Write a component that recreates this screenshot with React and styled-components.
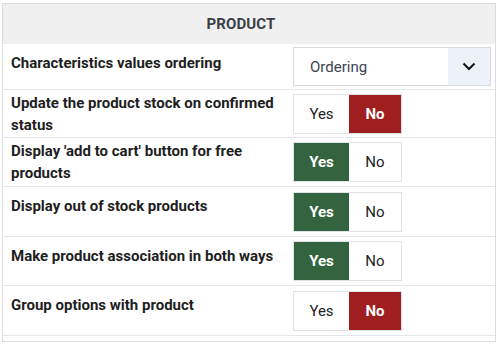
import React from 'react';
import styled, { createGlobalStyle } from 'styled-components';

const GlobalStyle = createGlobalStyle`
  body {
    margin: 0;
    background: #fff;
    font-family: Roboto, "Liberation Sans", Arial, sans-serif;
  }
`;

const Panel = styled.div`
  margin: 3px 0 0 2px;
  width: 494px;
  box-sizing: border-box;
  border: 1px solid #dcdcdc;
  padding-bottom: 5px;
`;

const Header = styled.div`
  height: 40px;
  background: #f0f0f0;
  display: flex;
  align-items: center;
  justify-content: center;
  padding-right: 16px;
  font-size: 15px;
  font-weight: 700;
  color: #3a3f47;
  letter-spacing: 0.1px;
`;

const Row = styled.div`
  display: grid;
  grid-template-columns: 290px 1fr;
  height: ${(p) => p.$height}px;
  border-bottom: 1px solid #e4e6e9;
`;

const Label = styled.div`
  padding: ${(p) => (p.$wrap ? 2 : 8)}px 2px 0 8px;
  font-size: 15px;
  line-height: 22px;
  font-weight: 700;
  color: #1e1e1e;
`;

const Control = styled.div`
  display: flex;
  align-items: center;
`;

const Select = styled.div`
  display: flex;
  width: 198px;
  height: 39px;
  box-sizing: border-box;
  border: 1px solid #d6dbe2;
  background: #fff;
`;

const SelectValue = styled.div`
  flex: 1;
  display: flex;
  align-items: center;
  padding-left: 16px;
  font-size: 15px;
  color: #3d4450;
`;

const SelectArrow = styled.div`
  width: 42px;
  display: flex;
  align-items: center;
  justify-content: center;
  background: #edf2f9;
`;

const Toggle = styled.div`
  display: flex;
  height: 40px;
  box-sizing: border-box;
  border: 1px solid #dfe3e8;
`;

const Option = styled.div`
  width: ${(p) => p.$width}px;
  display: flex;
  align-items: center;
  justify-content: center;
  font-size: 15px;
  font-weight: ${(p) => (p.$active ? 700 : 400)};
  color: ${(p) => (p.$active ? '#fff' : '#222')};
  background: ${(p) => (p.$active ? (p.$tone === 'yes' ? '#346340' : '#9f1e20') : '#fff')};
`;

const settings = [
  { label: 'Update the product stock on confirmed status', value: false, wrap: true, height: 47 },
  { label: "Display 'add to cart' button for free products", value: true, wrap: true, height: 48 },
  { label: 'Display out of stock products', value: true, height: 49 },
  { label: 'Make product association in both ways', value: true, height: 48 },
  { label: 'Group options with product', value: false, height: 49 },
];

const YesNo = ({ value }) => (
  <Toggle>
    <Option $width={55} $active={value} $tone="yes">Yes</Option>
    <Option $width={52} $active={!value} $tone="no">No</Option>
  </Toggle>
);

const App = () => (
  <>
    <GlobalStyle />
    <Panel>
      <Header>PRODUCT</Header>
      <Row $height={45}>
        <Label>Characteristics values ordering</Label>
        <Control>
          <Select>
            <SelectValue>Ordering</SelectValue>
            <SelectArrow>
              <svg width="14" height="9" viewBox="0 0 14 9">
                <path d="M1.5 1.5 L7 7 L12.5 1.5" fill="none" stroke="#111" strokeWidth="2" />
              </svg>
            </SelectArrow>
          </Select>
        </Control>
      </Row>
      {settings.map((s, idx) => (
        <Row key={idx} $height={s.height}>
          <Label $wrap={s.wrap}>{s.label}</Label>
          <Control>
            <YesNo value={s.value} />
          </Control>
        </Row>
      ))}
    </Panel>
  </>
);

export default App;
